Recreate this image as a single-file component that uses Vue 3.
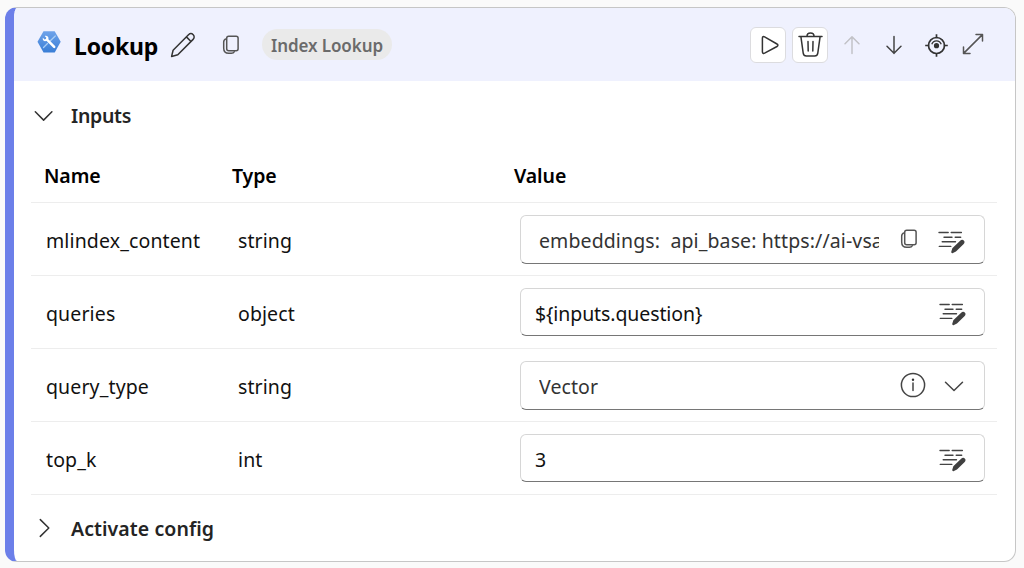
<script setup>
const rows = [
  { name: 'mlindex_content', type: 'string', value: 'embeddings:\u00a0 api_base: https://ai-vsa', kind: 'copy' },
  { name: 'queries', type: 'object', value: '${inputs.question}', kind: 'edit' },
  { name: 'query_type', type: 'string', value: 'Vector', kind: 'select' },
  { name: 'top_k', type: 'int', value: '3', kind: 'edit' },
]
</script>

<template>
  <main class="page">
    <section class="card">
      <header class="head">
        <svg class="logo" width="26" height="24" viewBox="0 0 26 24">
          <defs>
            <linearGradient id="hex" x1="0" y1="0" x2="0" y2="1">
              <stop offset="0" stop-color="#6fa3ea" />
              <stop offset="1" stop-color="#3a7ed6" />
            </linearGradient>
          </defs>
          <path d="M7.500 1.200h11.200l6 10.600-6 10.600H7.500L1.500 11.800z" fill="url(#hex)" />
          <path d="M19.300 6l-6.300 6M11.500 13.500l-4 4" stroke="#a9cdf5" stroke-width="1.300" fill="none" />
          <path d="M11 9.700l7.200 7.200" stroke="#fff" stroke-width="2.500" stroke-linecap="round" />
          <path d="M8.700 5.900l1.700 1.800-.5 1.300-1.300.4-1.800-1.700c-.5 2.400 1.200 4.100 3.500 3.400l2.100-2.100c.6-2.100-1.400-3.800-3.700-3.100z" fill="#fff" />
        </svg>
        <h1>Lookup</h1>
        <svg class="pencil" width="26" height="26" viewBox="0 0 26 26">
          <path d="M1.600 24.400l1.500-6.200L18.500 2.800c1.400-1.400 3.400-1.400 4.700-.1s1.300 3.400-.1 4.700L7.800 22.800zM16.400 4.900l4.600 4.600" />
        </svg>
        <svg class="copy" width="18" height="20" viewBox="0 0 18 20">
          <rect x="4.700" y="1.200" width="11.400" height="14.600" rx="2" />
          <path d="M4 3.900C2.500 4.400 1.700 5.300 1.700 7v6.300c0 3.300 1.700 5 5 5h2.600c1.500 0 2.500-.4 3-1.500" />
        </svg>
        <span class="pill"><span>Index Lookup</span></span>
        <div class="actions">
          <button class="btn">
            <svg width="34" height="34" viewBox="0 0 34 34"><path d="M11.400 10.200v13.600c0 1.400 1 2 2.200 1.400l12.400-6.700c1.200-.6 1.200-1.900 0-2.500L13.600 8.800c-1.200-.6-2.200 0-2.200 1.400z" /></svg>
          </button>
          <button class="btn">
            <svg width="34" height="34" viewBox="0 0 34 34"><path d="M6 8.400h23M14 8.100c0-4.300 7-4.300 7 0M7.900 8.700l2.300 16.400c.3 2 1.300 2.900 3.200 2.900h8.200c1.900 0 2.900-.9 3.200-2.900l2.300-16.400M15 13.600l.2 9.300M20 13.600l-.2 9.300" /></svg>
          </button>
          <svg class="up" width="18" height="20" viewBox="0 0 18 20"><path d="M9 18.500V2M2 8.700l7-7 7 7" /></svg>
          <svg class="down" width="18" height="20" viewBox="0 0 18 20"><path d="M9 1.500v17M2 11.300l7 7 7-7" /></svg>
          <svg class="target" width="24" height="24" viewBox="0 0 24 24">
            <circle cx="12.500" cy="12.500" r="8" />
            <circle cx="12.500" cy="12.700" r="2.600" class="dot" />
            <path d="M12.500 1.200v4M12.500 20v3.800M1.200 12.500h4M19.800 12.500h4" />
            <path class="thin" d="M7.800 11.200c1.500-4.500 7.900-4.500 9.400 0" />
          </svg>
          <svg class="expand" width="22" height="22" viewBox="0 0 22 22"><path d="M1.600 20.400L20.400 1.600M14 1.500h6.500V8M1.500 14v6.500H8" /></svg>
        </div>
      </header>

      <div class="section first">
        <svg width="20" height="20" viewBox="0 0 20 20"><path d="M1.300 5.800l8.300 8.300 8.300-8.300" /></svg>
        <h2 class="t-inputs">Inputs</h2>
      </div>

      <div class="table">
        <div class="row thead">
          <div>Name</div>
          <div>Type</div>
          <div>Value</div>
        </div>
        <div v-for="r in rows" :key="r.name" class="row">
          <div class="name">{{ r.name }}</div>
          <div class="type">{{ r.type }}</div>
          <div class="cell">
            <div class="field" :class="'f-' + r.kind">
              <span class="val">{{ r.value }}</span>
              <svg v-if="r.kind === 'copy'" class="copy" width="18" height="20" viewBox="0 0 18 20">
                <rect x="4.700" y="1.200" width="11.400" height="14.600" rx="2" />
                <path d="M4 3.900C2.500 4.400 1.700 5.300 1.700 7v6.300c0 3.300 1.700 5 5 5h2.600c1.500 0 2.500-.4 3-1.500" />
              </svg>
              <template v-if="r.kind === 'select'">
                <svg class="info" width="26" height="26" viewBox="0 0 26 26">
                  <circle cx="13" cy="13" r="11.600" /><path d="M13 11v7.500" /><circle cx="13" cy="7.800" r="1.200" class="dot" />
                </svg>
                <svg class="chev" width="20" height="20" viewBox="0 0 20 20"><path d="M1.500 6.200l8.500 8.300 8.500-8.300" /></svg>
              </template>
              <svg v-else class="edit" width="28" height="24" viewBox="0 0 28 24">
                <path d="M1 2.500h9.200M13.200 2.500h10.200M6 7.200h8M17.200 7.200h5.500M4.200 11.800h13.300M1.300 16.400h11.500" />
                <path class="pen" d="M14.400 22l1-3.200 7.300-7c1.900-1.700 3.400 0 1.900 1.600l-7.200 7z" />
              </svg>
            </div>
          </div>
        </div>
      </div>

      <div class="section last">
        <svg width="20" height="20" viewBox="0 0 20 20"><path d="M6.300 1.600l8.500 8.400-8.500 8.400" /></svg>
        <h2 class="t-act">Activate config</h2>
      </div>
    </section>
  </main>
</template>

<style>
body { background: #fafafa; }
</style>

<style scoped>
* { box-sizing: border-box; }
.page {
  height: 568px;
  padding: 7px 8px 6px 5px;
  background: #fafafa;
  font-family: "Noto Sans", "Open Sans", sans-serif;
  color: #111;
  overflow: hidden;
}
.card {
  height: 555px;
  border: 1px solid #c6c6c6;
  border-left: 9px solid #6c7fe9;
  border-radius: 12px;
  background: #fff;
  overflow: hidden;
}
svg { display: block; flex: none; fill: none; stroke: #333; stroke-width: 1.500; stroke-linecap: round; stroke-linejoin: round; }
.head { height: 73px; background: #eff1fe; display: flex; align-items: center; padding-left: 22px; }
.logo { margin: -6px 0 0; stroke: none; }
h1 { font-size: 23px; line-height: 30px; font-weight: 700; margin: 2px 0 0 12px; width: 85px; color: #000; white-space: nowrap; letter-spacing: -0.200px; }
.pencil { margin-left: 11px; }
.copy { stroke: #555; }
.head .copy { margin-left: 26px; }
.pill { margin-left: 22px; width: 130px; height: 31px; border-radius: 16px; background: #eaeaea; color: #6b6b6b; font-size: 17px; line-height: 33px; font-weight: 600; text-align: center; white-space: nowrap; letter-spacing: -0.100px; }
.actions { margin-left: auto; display: flex; align-items: center; padding-right: 31px; }
.btn { width: 36px; height: 36px; padding: 0; border: 1px solid #dcdcdf; border-radius: 6px; background: #fff; margin-right: 6px; }
.up { stroke: #c2c2c7; margin-left: 9px; }
.down { stroke: #444; margin-left: 24px; }
.target { margin-left: 21px; stroke-width: 1.700; stroke-linecap: butt; }
.target .thin { stroke-width: 1.300; }
.dot { fill: #333; stroke: none; }
.expand { margin-left: 14px; stroke: #555; margin-top: -2px; }
.section { display: flex; align-items: center; padding-left: 20px; height: 69px; }
.last { height: 67px; }
.last svg { margin-top: -2px; }
h2 { margin: 0 0 0 17px; font-size: 19.500px; line-height: 26px; font-weight: 600; color: #242424; white-space: nowrap; }
.t-inputs { letter-spacing: -0.300px; }
.t-act { letter-spacing: 0.070px; }
.table { margin: 0 18px 0 17px; }
.row { height: 73px; display: grid; grid-template-columns: 188px 282px minmax(0, 1fr); align-items: center; border-bottom: 1px solid #ededed; font-size: 19.500px; line-height: 26px; white-space: nowrap; }
.thead { height: 53px; font-weight: 600; color: #000; }
.thead > div { padding: 0 0 0 13px; letter-spacing: -0.100px; }
.name { padding: 3px 0 0 15px; letter-spacing: 0.130px; }
.type { padding: 3px 0 0 19px; letter-spacing: 0.100px; }
.cell { padding: 0 12px 0 19px; }
.field { height: 49px; border: 1px solid #d6d6d6; border-bottom-color: #767676; border-radius: 6px; display: flex; align-items: center; padding: 0 17px 0 14px; }
.f-edit { height: 48px; }
.f-copy, .f-select { padding-left: 18px; }
.val { flex: 1; overflow: hidden; min-width: 0; margin-top: 3px; letter-spacing: -0.100px; }
.f-copy .val { flex: none; width: 340px; color: #333; letter-spacing: 0.110px; }
.f-copy .copy { margin: -1px 20px 0 21px; }
.f-copy .edit { margin-top: 6px; }
.f-select .val { color: #333; letter-spacing: 0.100px; }
.info { stroke: #444; margin: -1px 18px 0 0; }
.chev { stroke: #444; margin: 1px 3px 0 0; }
.edit { stroke: #444; stroke-width: 1.400; margin-top: 4px; }
.edit .pen { fill: #404040; stroke: #404040; stroke-width: 2.400; }
</style>
